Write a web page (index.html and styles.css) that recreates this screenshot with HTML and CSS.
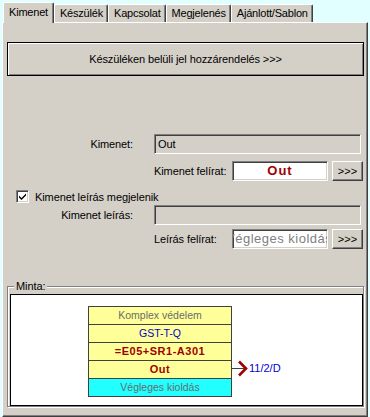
FILE: index.html
```html
<!DOCTYPE html>
<html lang="hu">
<head>
    <meta charset="UTF-8">
    <title>Kimenet</title>
    <link rel="stylesheet" href="styles.css">
</head>
<body>
    <!-- Tabs -->
    <div class="tabs">
        <div class="tab active">Kimenet</div>
        <div class="tab">Készülék</div>
        <div class="tab">Kapcsolat</div>
        <div class="tab">Megjelenés</div>
        <div class="tab">Ajánlott/Sablon</div>
    </div>

    <div class="panel">
        <button class="big-btn">Készüléken belüli jel hozzárendelés &gt;&gt;&gt;</button>

        <div class="row first">
            <span class="lbl">Kimenet:</span>
            <div class="field wide">Out</div>
        </div>

        <div class="row sub">
            <span class="lbl-sub">Kimenet felírat:</span>
            <div class="field narrow white out-text">Out</div>
            <button class="small-btn">&gt;&gt;&gt;</button>
        </div>

        <div class="check-row">
            <span class="checkbox">
                <svg width="9" height="9" viewBox="0 0 9 9"><path d="M1 3.5 L3.5 6 L8 1.5 V3.5 L3.5 8 L1 5.5 Z" fill="#000"/></svg>
            </span>
            <span>Kimenet leírás megjelenik</span>
        </div>

        <div class="row third">
            <span class="lbl">Kimenet leírás:</span>
            <div class="field wide"></div>
        </div>

        <div class="row sub fourth">
            <span class="lbl-sub">Leírás felírat:</span>
            <div class="field narrow white desc-text"><span class="scrolled">Végleges kioldás</span></div>
            <button class="small-btn">&gt;&gt;&gt;</button>
        </div>

        <!-- Minta group -->
        <div class="group">
            <span class="legend">Minta:</span>
            <div class="sample">
                <div class="sample-inner">
                    <div class="symbol">
                        <div class="cell gray">Komplex védelem</div>
                        <div class="cell blue">GST-T-Q</div>
                        <div class="cell red">=E05+SR1-A301</div>
                        <div class="cell red">Out</div>
                        <div class="cell gray cyan">Végleges kioldás</div>
                    </div>
                    <div class="connector">
                        <svg width="17" height="18" viewBox="0 0 17 18">
                            <line x1="0" y1="9.5" x2="12" y2="9.5" stroke="#404040" stroke-width="1"/>
                            <polyline points="7,2.5 14,9.5 7,16.5" fill="none" stroke="#a00000" stroke-width="2.6"/>
                        </svg>
                        <span class="ref">11/2/D</span>
                    </div>
                </div>
            </div>
        </div>
    </div>
</body>
</html>
```

FILE: styles.css
```css
/* Windows style property sheet */
body {
    margin: 0;
    padding: 0 2px;
    background-color: #e1ffff;
    font-family: "Liberation Sans", Arial, sans-serif;
    font-size: 11px;
    letter-spacing: -0.1px;
    color: #000;
}

/* Tabs */
.tabs {
    display: flex;
    align-items: flex-end;
    height: 22px;
    padding-left: 1px;
    position: relative;
    z-index: 1;
    letter-spacing: -0.2px;
}
.tab {
    height: 17px;
    line-height: 17px;
    padding: 0 4px 0 5px;
    background-color: #d4d0c8;
    border-top: 1px solid #fff;
    border-left: 1px solid #fff;
    border-right: 1px solid #404040;
    box-shadow: inset -1px 0 #808080;
    border-radius: 2px 2px 0 0;
}
.tab.active {
    height: 20px;
    line-height: 18px;
    margin-bottom: -1px;
    padding: 0 5px 0 5px;
}

/* Panel */
.panel {
    background-color: #d4d0c8;
    border-top: 1px solid #fff;
    border-left: 1px solid #fff;
    border-right: 1px solid #404040;
    border-bottom: 1px solid #404040;
    box-shadow: inset -1px -1px #808080;
    padding: 19px 3px 9px 4px;
}

.big-btn {
    display: block;
    width: 100%;
    height: 34px;
    margin: 0;
    background-color: #d4d0c8;
    border: 1px solid #000;
    box-shadow: inset 1px 1px #fff, inset -1px -1px #808080;
    font-family: inherit;
    font-size: 11px;
    letter-spacing: -0.1px;
    color: #000;
    padding: 0;
}

.row {
    display: flex;
    align-items: center;
    height: 20px;
}
.row.first {
    margin-top: 58px;
}
.row.sub {
    margin-top: 7px;
    padding-left: 147px;
}
.row.third {
    margin-top: 2px;
}
.row.sub.fourth {
    margin-top: 4px;
}
.lbl {
    width: 126px;
    text-align: right;
    margin-right: 21px;
}
.lbl-sub {
    width: 78px;
}

.field {
    box-sizing: border-box;
    height: 20px;
    border-top: 1px solid #808080;
    border-left: 1px solid #808080;
    border-bottom: 1px solid #fff;
    border-right: 1px solid #fff;
    box-shadow: inset 1px 1px #404040, inset -1px -1px #d4d0c8;
    padding: 0 3px;
    line-height: 18px;
    overflow: hidden;
    white-space: nowrap;
}
.field.wide {
    width: 207px;
}
.field.narrow {
    width: 96px;
}
.field.white {
    background-color: #fff;
}
.out-text {
    text-align: center;
    color: #a00000;
    font-weight: bold;
    font-size: 13px;
    letter-spacing: 1px;
}
.desc-text {
    color: #808080;
    font-size: 13px;
    letter-spacing: 0.5px;
    padding-left: 2px;
}
.scrolled {
    margin-left: -9px;
}

.small-btn {
    box-sizing: border-box;
    width: 31px;
    height: 20px;
    margin: 0 0 0 4px;
    padding: 0;
    background-color: #d4d0c8;
    border-top: 1px solid #fff;
    border-left: 1px solid #fff;
    border-right: 1px solid #404040;
    border-bottom: 1px solid #404040;
    box-shadow: inset -1px -1px #808080;
    font-family: inherit;
    font-size: 11px;
    color: #000;
}

.check-row {
    display: flex;
    align-items: center;
    height: 13px;
    margin-top: 9px;
    margin-left: 9px;
}
.checkbox {
    box-sizing: border-box;
    width: 13px;
    height: 13px;
    margin-right: 6px;
    background-color: #fff;
    border-top: 1px solid #808080;
    border-left: 1px solid #808080;
    border-bottom: 1px solid #fff;
    border-right: 1px solid #fff;
    box-shadow: inset 1px 1px #404040, inset -1px -1px #d4d0c8;
    display: flex;
    align-items: center;
    justify-content: center;
}

/* Minta group box */
.group {
    position: relative;
    margin-top: 37px;
    border: 1px solid #808080;
    box-shadow: 1px 1px #fff, inset 1px 1px #fff;
    padding: 7px 0 0 2px;
}
.legend {
    position: absolute;
    top: -7px;
    left: 6px;
    padding: 0 2px;
    background-color: #d4d0c8;
    line-height: 13px;
}
.sample {
    height: 110px;
    border: 1px solid #000;
    background-color: #fff;
}
.sample-inner {
    display: flex;
    align-items: flex-start;
    margin: 11px 0 0 77px;
    letter-spacing: 0;
}
.symbol {
    width: 142px;
    border: 1px solid #404040;
}
.cell {
    height: 17px;
    line-height: 17px;
    text-align: center;
    background-color: #ffff99;
    border-top: 1px solid #404040;
    font-size: 10.5px;
}
.cell:first-child {
    border-top: none;
}
.cell.gray {
    color: #6b6b6b;
}
.cell.blue {
    color: #0000d0;
}
.cell.red {
    color: #a00000;
    font-weight: bold;
    font-size: 11px;
    letter-spacing: 0.5px;
}
.cell.cyan {
    background-color: #22ffff;
}
.connector {
    display: flex;
    align-items: center;
    margin-top: 53px;
}
.connector svg {
    display: block;
}
.ref {
    color: #0000d0;
    font-size: 11px;
}
```
